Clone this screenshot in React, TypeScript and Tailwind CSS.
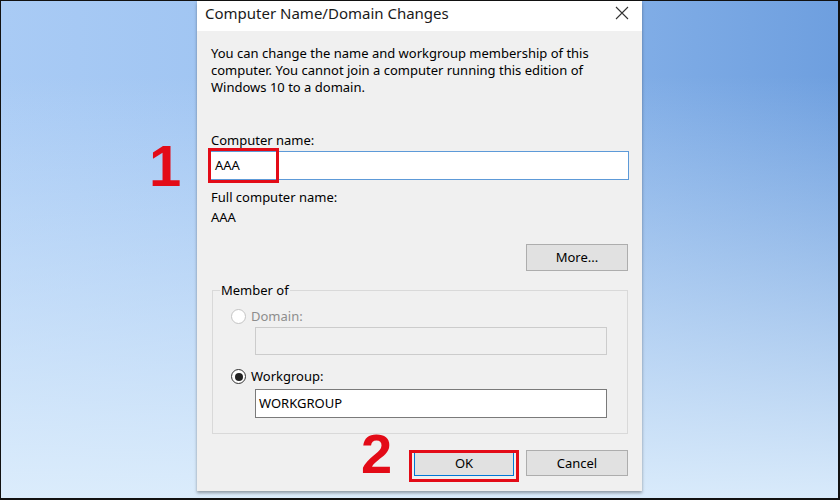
// Computer Name/Domain Changes dialog with tutorial markers

const font = "font-['Noto_Sans','Open_Sans',sans-serif]";

function Radio({ checked, disabled }: { checked?: boolean; disabled?: boolean }) {
  return (
    <span
      className={`flex items-center justify-center w-[15px] h-[15px] rounded-full border bg-white ${
        disabled ? 'border-[#c4c4c4]' : 'border-[#333333]'
      }`}
    >
      {checked && <span className="w-[8px] h-[8px] rounded-full bg-[#222222]" />}
    </span>
  );
}

function Button({ label, focused, width }: { label: string; focused?: boolean; width: string }) {
  return (
    <div
      className={`${width} h-[26px] flex items-center justify-center bg-[#e1e1e1] border text-black ${
        focused ? 'border-[#0078d7]' : 'border-[#adadad]'
      }`}
    >
      {label}
    </div>
  );
}

export default function App() {
  return (
    <div
      className={`${font} relative w-[840px] h-[500px] overflow-hidden flex justify-center border-t border-l border-r-2 border-b-2 border-[#111111] bg-[linear-gradient(to_bottom,rgba(222,238,252,0)_15%,rgba(222,238,252,0.95)_100%),linear-gradient(to_right,#a9cbf5,#9cc2f1_40%,#6e9fdf)]`}
    >
      {/* Dialog */}
      <div className="w-[445px] h-[490px] flex flex-col shadow-[0_2px_3px_rgba(0,0,0,0.35)]">
        <div className="h-[30px] bg-white flex items-start justify-between pl-[8px] pr-[12px] pt-[3px]">
          <span className="text-[15px] leading-[18px] text-[#1a1a1a]">Computer Name/Domain Changes</span>
          <svg width="16" height="16" viewBox="0 0 16 16" className="mt-[1px]">
            <path d="M2 2 L14 14 M14 2 L2 14" stroke="#333333" strokeWidth="1.1" fill="none" />
          </svg>
        </div>

        <div className="flex-1 bg-[#f0f0f0] px-[13px] pt-[14px] flex flex-col text-[13px] leading-[17px] text-black">
          <p className="pl-px whitespace-nowrap">
            You can change the name and workgroup membership of this
            <br />
            computer. You cannot join a computer running this edition of
            <br />
            Windows 10 to a domain.
          </p>

          <span className="mt-[36px] pl-px">Computer name:</span>
          <div className="mt-[2px] h-[29px] bg-white border border-[#5d9ad8] flex items-center pl-[4px]">AAA</div>

          <span className="mt-[9px] pl-px">Full computer name:</span>
          <span className="mt-[3px] pl-px">AAA</span>

          <div className="self-end mt-[18px] mr-px w-[102px] h-[27px] flex items-center justify-center bg-[#e1e1e1] border border-[#adadad]">
            More...
          </div>

          <fieldset className="mt-[11px] ml-[2px] mr-px border border-[#d9d9d9] pl-[7px] pb-[15px]">
            <legend className="px-px">Member of</legend>
            <div className="mt-[9px] ml-[11px] flex items-center gap-[5px] text-[#8d8d8d]">
              <Radio disabled />
              <span>Domain:</span>
            </div>
            <div className="mt-[2px] ml-[35px] w-[352px] h-[28px] border border-[#cccccc] bg-[#f0f0f0]" />
            <div className="mt-[13px] ml-[11px] flex items-center gap-[5px]">
              <Radio checked />
              <span>Workgroup:</span>
            </div>
            <div className="mt-[4px] ml-[35px] w-[352px] h-[29px] border border-[#7a7a7a] bg-white flex items-center pl-[3px]">
              WORKGROUP
            </div>
          </fieldset>

          <div className="mt-[16px] mr-px flex justify-end gap-[12px]">
            <Button label="OK" focused width="w-[100px]" />
            <Button label="Cancel" width="w-[102px]" />
          </div>
        </div>
      </div>

      {/* Tutorial markers */}
      <div className="absolute left-[207px] top-[147px] w-[71px] h-[35px] border-[3px] border-[#e30b17]" />
      <div className="absolute left-[408px] top-[449px] w-[110px] h-[32px] border-[3px] border-[#e30b17]" />
      <span className="absolute left-[148px] top-[136px] font-['Liberation_Sans',Arial,sans-serif] font-bold text-[58px] leading-none text-[#e30b17]">
        1
      </span>
      <span className="absolute left-[360px] top-[425px] font-['Liberation_Sans',Arial,sans-serif] font-bold text-[56px] leading-none text-[#e30b17]">
        2
      </span>
    </div>
  );
}
